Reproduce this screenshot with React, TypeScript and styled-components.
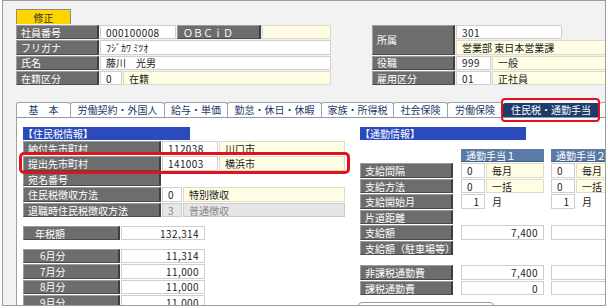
import React from "react";
import styled, { createGlobalStyle, css } from "styled-components";

const GlobalStyle = createGlobalStyle`
  body {
    margin: 0;
    background: #fff;
    font-family: "Noto Sans CJK JP", "Noto Sans", sans-serif;
    font-size: 10px;
    color: #1a1a1a;
  }
`;

const ROW = 14.5;
const HEAD_ROW = 14.3;

type Tone = "white" | "yellow" | "gray" | "plain";

const toneBg: Record<Tone, string> = {
  white: "#ffffff",
  yellow: "#fffde4",
  gray: "#e6e6e6",
  plain: "transparent",
};

const toneBorder: Record<Tone, string> = {
  white: "#cfcfcf",
  yellow: "#dedcc6",
  gray: "#cacaca",
  plain: "transparent",
};

const Frame = styled.div`
  margin-left: 2px;
  width: 604px;
  height: 306px;
  box-sizing: border-box;
  border: 1px solid #9c9c9c;
  background: #f2f2f2;
  overflow: hidden;
  display: flex;
  flex-direction: column;
`;

const Header = styled.div`
  display: flex;
  gap: 41px;
  padding: 8px 0 0 13px;
  flex: none;
`;

const HeadBlock = styled.div<{ $w?: number; $top?: number }>`
  display: flex;
  flex-direction: column;
  gap: 1px;
  width: ${(p) => (p.$w ? `${p.$w}px` : "auto")};
  margin-top: ${(p) => p.$top ?? 0}px;
  flex: none;
`;

const ValueStack = styled.div`
  display: flex;
  flex-direction: column;
  gap: 1px;
`;

const EditButton = styled.div`
  width: 55px;
  height: 15px;
  box-sizing: border-box;
  border: 1px solid #8d8d8d;
  border-bottom: none;
  background: #ffd500;
  color: #333;
  display: flex;
  align-items: center;
  justify-content: center;
`;

const Row = styled.div<{ $h?: number; $gap?: number; $mt?: number; $mark?: boolean }>`
  display: flex;
  gap: ${(p) => p.$gap ?? 1}px;
  height: ${(p) => p.$h ?? ROW}px;
  margin-top: ${(p) => p.$mt ?? 0}px;
  flex: none;
  ${(p) =>
    p.$mark &&
    css`
      position: relative;
      &::after {
        content: "";
        position: absolute;
        top: -4px;
        bottom: -3.5px;
        left: -4px;
        right: -5px;
        border: 3px solid #e3111b;
        border-radius: 5px;
      }
    `}
`;

const Label = styled.div<{ $w: number; $indent?: number; $spaced?: boolean }>`
  box-sizing: border-box;
  width: ${(p) => p.$w}px;
  flex: none;
  height: 100%;
  display: flex;
  align-items: center;
  padding-left: ${(p) => p.$indent ?? 4}px;
  background: #6d6d6d;
  color: #fff;
  border-style: solid;
  border-width: 1px 2px 1px 1px;
  border-color: #9d9d9d #3e3e3e #4a4a4a #9d9d9d;
  white-space: nowrap;
  overflow: hidden;
`;

const Cell = styled.div<{ $w?: number; $tone?: Tone; $right?: boolean; $num?: boolean }>`
  box-sizing: border-box;
  width: ${(p) => (p.$w ? `${p.$w}px` : "auto")};
  flex: ${(p) => (p.$w ? "none" : "1 1 auto")};
  height: 100%;
  display: flex;
  align-items: center;
  justify-content: ${(p) => (p.$right ? "flex-end" : "flex-start")};
  padding: 0 5px;
  border: 1px solid ${(p) => toneBorder[p.$tone ?? "white"]};
  background: ${(p) => toneBg[p.$tone ?? "white"]};
  color: ${(p) => (p.$tone === "gray" ? "#858585" : "#1a1a1a")};
  letter-spacing: ${(p) => (p.$num ? "0.4px" : "0")};
  white-space: nowrap;
  overflow: hidden;
`;

const TabBar = styled.div`
  display: flex;
  align-items: flex-end;
  height: 15px;
  padding-left: 13px;
  margin-top: 16.8px;
  flex: none;
`;

const Tab = styled.div<{ $w: number; $active?: boolean }>`
  box-sizing: border-box;
  width: ${(p) => p.$w}px;
  height: 15px;
  flex: none;
  display: flex;
  align-items: center;
  justify-content: center;
  border: 1px solid #9aa3b0;
  border-bottom: none;
  border-radius: 3px 3px 0 0;
  background: #fff;
  color: #1e3966;
  white-space: nowrap;
  & + & {
    margin-left: -1px;
  }
  ${(p) =>
    p.$active &&
    css`
      position: relative;
      background: #1d3c6a;
      border-color: #fff;
      color: #fff;
      &::after {
        content: "";
        position: absolute;
        top: -5px;
        bottom: -5px;
        left: -2px;
        right: -1px;
        border: 2.5px solid #e3111b;
        border-radius: 4px;
      }
    `}
`;

const Panel = styled.div`
  flex: 1 0 auto;
  width: 640px;
  margin-left: 13px;
  box-sizing: border-box;
  background: #fff;
  border-top: 1px solid #8e9aab;
  border-left: 1px solid #a0a0a0;
  padding: 9px 0 0 6px;
  display: flex;
  align-items: flex-start;
`;

const Column = styled.div<{ $w: number; $ml?: number }>`
  display: flex;
  flex-direction: column;
  gap: 1px;
  width: ${(p) => p.$w}px;
  margin-left: ${(p) => p.$ml ?? 0}px;
  flex: none;
`;

const SectionBar = styled.div<{ $w: number }>`
  width: ${(p) => p.$w}px;
  height: 13px;
  background: #2b4bbd;
  color: #fff;
  display: flex;
  align-items: center;
  white-space: nowrap;
  flex: none;
`;

const HeadRow = styled.div`
  display: flex;
  gap: 7px;
  padding-left: 101px;
  margin-top: 8px;
  height: 13.3px;
  flex: none;
`;

const ColHead = styled.div`
  box-sizing: border-box;
  width: 83px;
  flex: none;
  background: #5b7ba6;
  border-bottom: 1px solid #3f5f8c;
  color: #fff;
  padding-left: 5px;
  display: flex;
  align-items: center;
  white-space: nowrap;
`;

const Slot = styled.div<{ $ml: number }>`
  display: flex;
  gap: 1px;
  width: 83px;
  flex: none;
  margin-left: ${(p) => p.$ml}px;
`;

const SubButton = styled.div`
  box-sizing: border-box;
  width: 136px;
  height: 22px;
  margin: 5.7px 0 0 -2px;
  border: 1px solid #9a9a9a;
  border-radius: 4px;
  background: #fff;
  color: #1a4fd0;
  text-align: center;
  padding-top: 2px;
  white-space: nowrap;
`;

const tabs = [
  { text: "基　本", w: 55 },
  { text: "労働契約・外国人", w: 95 },
  { text: "給与・単価", w: 64 },
  { text: "勤怠・休日・休暇", w: 95 },
  { text: "家族・所得税", w: 73 },
  { text: "社会保険", w: 55 },
  { text: "労働保険", w: 56 },
  { text: "住民税・通勤手当", w: 98, active: true },
  { text: "その他", w: 50 },
];

const months = [
  { label: "6月分", value: "11,314" },
  { label: "7月分", value: "11,000" },
  { label: "8月分", value: "11,000" },
  { label: "9月分", value: "11,000" },
];

const App = (): JSX.Element => {
  return (
    <>
      <GlobalStyle />
      <Frame>
        <Header>
          <HeadBlock $w={315}>
            <EditButton>修正</EditButton>
            <Row $h={HEAD_ROW}>
              <Label $w={83}>社員番号</Label>
              <Cell $w={76} $num>000100008</Cell>
              <Label $w={84} $indent={5}>ＯＢＣｉＤ</Label>
              <Cell $tone="yellow" />
            </Row>
            <Row $h={HEAD_ROW}>
              <Label $w={83}>フリガナ</Label>
              <Cell>ﾌｼﾞｶﾜ ﾐﾂｵ</Cell>
            </Row>
            <Row $h={HEAD_ROW}>
              <Label $w={83}>氏名</Label>
              <Cell>藤川　光男</Cell>
            </Row>
            <Row $h={HEAD_ROW}>
              <Label $w={83}>在籍区分</Label>
              <Cell $w={22}>0</Cell>
              <Cell $tone="yellow">在籍</Cell>
            </Row>
          </HeadBlock>

          <HeadBlock $top={16}>
            <Row $h={HEAD_ROW * 2 + 1}>
              <Label $w={83}>所属</Label>
              <ValueStack>
                <Row $h={HEAD_ROW}>
                  <Cell $w={106} $num>301</Cell>
                </Row>
                <Row $h={HEAD_ROW}>
                  <Cell $w={156} $tone="yellow">営業部 東日本営業課</Cell>
                </Row>
              </ValueStack>
            </Row>
            <Row $h={HEAD_ROW}>
              <Label $w={83}>役職</Label>
              <Cell $w={35} $num>999</Cell>
              <Cell $w={120} $tone="yellow">一般</Cell>
            </Row>
            <Row $h={HEAD_ROW}>
              <Label $w={83}>雇用区分</Label>
              <Cell $w={35} $num>01</Cell>
              <Cell $w={120} $tone="yellow">正社員</Cell>
            </Row>
          </HeadBlock>
        </Header>

        <TabBar>
          {tabs.map((t) => (
            <Tab key={t.text} $w={t.w} $active={t.active}>
              {t.text}
            </Tab>
          ))}
        </TabBar>

        <Panel>
          <Column $w={322}>
            <SectionBar $w={167}>【住民税情報】</SectionBar>
            <Row>
              <Label $w={138}>納付先市町村</Label>
              <Cell $w={56} $num>112038</Cell>
              <Cell $w={126} $tone="yellow">川口市</Cell>
            </Row>
            <Row $mark>
              <Label $w={138}>提出先市町村</Label>
              <Cell $w={56} $num>141003</Cell>
              <Cell $w={126} $tone="yellow">横浜市</Cell>
            </Row>
            <Row>
              <Label $w={138}>宛名番号</Label>
            </Row>
            <Row>
              <Label $w={138}>住民税徴収方法</Label>
              <Cell $w={20}>0</Cell>
              <Cell $w={162} $tone="yellow">特別徴収</Cell>
            </Row>
            <Row>
              <Label $w={138}>退職時住民税徴収方法</Label>
              <Cell $w={20} $tone="gray">3</Cell>
              <Cell $w={162} $tone="gray">普通徴収</Cell>
            </Row>

            <Row $mt={7.5}>
              <Label $w={97} $indent={11}>年税額</Label>
              <Cell $w={84} $right $num>132,314</Cell>
            </Row>

            {months.map((m, i) => (
              <Row key={m.label} $mt={i === 0 ? 7.2 : 0}>
                <Label $w={97} $indent={16}>{m.label}</Label>
                <Cell $w={84} $right $num>{m.value}</Cell>
              </Row>
            ))}
          </Column>

          <Column $w={280} $ml={15}>
            <SectionBar $w={166}>【通勤情報】</SectionBar>
            <HeadRow>
              <ColHead>通勤手当１</ColHead>
              <ColHead>通勤手当２</ColHead>
            </HeadRow>
            <Row $gap={0}>
              <Label $w={93}>支給間隔</Label>
              <Slot $ml={8}>
                <Cell $w={24}>0</Cell>
                <Cell $tone="yellow">毎月</Cell>
              </Slot>
              <Slot $ml={7}>
                <Cell $w={24}>0</Cell>
                <Cell $tone="yellow">毎月</Cell>
              </Slot>
            </Row>
            <Row $gap={0}>
              <Label $w={93}>支給方法</Label>
              <Slot $ml={8}>
                <Cell $w={24}>0</Cell>
                <Cell $tone="yellow">一括</Cell>
              </Slot>
              <Slot $ml={7}>
                <Cell $w={24}>0</Cell>
                <Cell $tone="yellow">一括</Cell>
              </Slot>
            </Row>
            <Row $gap={0}>
              <Label $w={93}>支給開始月</Label>
              <Slot $ml={8}>
                <Cell $w={24} $right>1</Cell>
                <Cell $tone="plain">月</Cell>
              </Slot>
              <Slot $ml={7}>
                <Cell $w={24} $right>1</Cell>
                <Cell $tone="plain">月</Cell>
              </Slot>
            </Row>
            <Row $gap={0}>
              <Label $w={93}>片道距離</Label>
            </Row>
            <Row $gap={0}>
              <Label $w={93}>支給額</Label>
              <Slot $ml={8}>
                <Cell $right $num>7,400</Cell>
              </Slot>
              <Slot $ml={7}>
                <Cell />
              </Slot>
            </Row>
            <Row $gap={0}>
              <Label $w={93}>支給額（駐車場等）</Label>
            </Row>

            <Row $gap={0} $mt={9}>
              <Label $w={93}>非課税通勤費</Label>
              <Slot $ml={8}>
                <Cell $right $num>7,400</Cell>
              </Slot>
              <Slot $ml={7}>
                <Cell />
              </Slot>
            </Row>
            <Row $gap={0}>
              <Label $w={93}>課税通勤費</Label>
              <Slot $ml={8}>
                <Cell $right $num>0</Cell>
              </Slot>
              <Slot $ml={7}>
                <Cell />
              </Slot>
            </Row>
            <SubButton>通勤手当支給履歴(R)</SubButton>
          </Column>
        </Panel>
      </Frame>
    </>
  );
};

export default App;
